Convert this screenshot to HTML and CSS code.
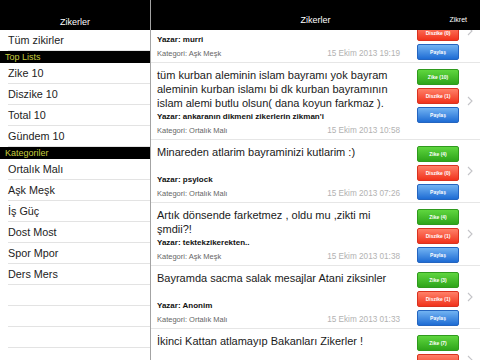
FILE: index.html
```html
<!DOCTYPE html>
<html lang="tr">

<head>
  <meta charset="UTF-8">
  <meta name="viewport" content="width=device-width, initial-scale=1.0">
  <title>Zikerler</title>
  <link rel="stylesheet" href="styles.css">
</head>

<body>
  <div class="app">

    <!-- Left menu -->
    <aside class="sidebar">
      <div class="navbar">
        <span class="nav-title">Zikerler</span>
      </div>
      <ul class="menu">
        <li class="menu-item">Tüm zikirler</li>
        <li class="menu-section">Top Lists</li>
        <li class="menu-item">Zike 10</li>
        <li class="menu-item">Diszike 10</li>
        <li class="menu-item">Total 10</li>
        <li class="menu-item">Gündem 10</li>
        <li class="menu-section">Kategoriler</li>
        <li class="menu-item">Ortalık Malı</li>
        <li class="menu-item">Aşk Meşk</li>
        <li class="menu-item">İş Güç</li>
        <li class="menu-item">Dost Most</li>
        <li class="menu-item">Spor Mpor</li>
        <li class="menu-item">Ders Mers</li>
        <li class="menu-item"></li>
        <li class="menu-item"></li>
        <li class="menu-item"></li>
      </ul>
    </aside>

    <!-- Feed -->
    <main class="main">
      <div class="navbar navbar-main">
        <span></span>
        <span class="nav-title">Zikerler</span>
        <a class="nav-action">Zikret</a>
      </div>

      <div class="feed">
        <div class="feed-list">

          <!-- scrolled half under the nav bar -->
          <div class="zik">
            <div class="zik-body">
              <p class="zik-text"></p>
              <p class="zik-author">Yazar: murri</p>
              <div class="zik-meta"><span>Kategori: Aşk Meşk</span><span class="zik-date">15 Ekim 2013 19:19</span></div>
            </div>
            <div class="zik-actions">
              <button class="btn btn-zike"></button>
              <button class="btn btn-diszike">Diszike (0)</button>
              <button class="btn btn-share">Paylaş</button>
            </div>
            <div class="zik-chevron"><svg width="6" height="10" viewBox="0 0 6 10"><polyline points="1,1 5,5 1,9" /></svg></div>
          </div>

          <div class="zik">
            <div class="zik-body">
              <p class="zik-text">tüm kurban aleminin islam bayramı yok bayram aleminin kurban islamı bi dk kurban bayramının islam alemi butlu olsun( dana koyun farkmaz ).</p>
              <p class="zik-author">Yazar: ankaranın dikmeni zikerlerin zikman'i</p>
              <div class="zik-meta"><span>Kategori: Ortalık Malı</span><span class="zik-date">15 Ekim 2013 10:58</span></div>
            </div>
            <div class="zik-actions">
              <button class="btn btn-zike">Zike (10)</button>
              <button class="btn btn-diszike">Diszike (1)</button>
              <button class="btn btn-share">Paylaş</button>
            </div>
            <div class="zik-chevron"><svg width="6" height="10" viewBox="0 0 6 10"><polyline points="1,1 5,5 1,9" /></svg></div>
          </div>

          <div class="zik">
            <div class="zik-body">
              <p class="zik-text">Minareden atlarim bayraminizi kutlarim :)</p>
              <p class="zik-author">Yazar: psylock</p>
              <div class="zik-meta"><span>Kategori: Ortalık Malı</span><span class="zik-date">15 Ekim 2013 07:26</span></div>
            </div>
            <div class="zik-actions">
              <button class="btn btn-zike">Zike (4)</button>
              <button class="btn btn-diszike">Diszike (0)</button>
              <button class="btn btn-share">Paylaş</button>
            </div>
            <div class="zik-chevron"><svg width="6" height="10" viewBox="0 0 6 10"><polyline points="1,1 5,5 1,9" /></svg></div>
          </div>

          <div class="zik">
            <div class="zik-body">
              <p class="zik-text">Artık dönsende farketmez , oldu mu ,zikti mi şmdii?!</p>
              <p class="zik-author">Yazar: tektekzikerekten..</p>
              <div class="zik-meta"><span>Kategori: Aşk Meşk</span><span class="zik-date">15 Ekim 2013 01:38</span></div>
            </div>
            <div class="zik-actions">
              <button class="btn btn-zike">Zike (4)</button>
              <button class="btn btn-diszike">Diszike (1)</button>
              <button class="btn btn-share">Paylaş</button>
            </div>
            <div class="zik-chevron"><svg width="6" height="10" viewBox="0 0 6 10"><polyline points="1,1 5,5 1,9" /></svg></div>
          </div>

          <div class="zik">
            <div class="zik-body">
              <p class="zik-text">Bayramda sacma salak mesajlar Atani ziksinler</p>
              <p class="zik-author">Yazar: Anonim</p>
              <div class="zik-meta"><span>Kategori: Ortalık Malı</span><span class="zik-date">15 Ekim 2013 01:33</span></div>
            </div>
            <div class="zik-actions">
              <button class="btn btn-zike">Zike (3)</button>
              <button class="btn btn-diszike">Diszike (1)</button>
              <button class="btn btn-share">Paylaş</button>
            </div>
            <div class="zik-chevron"><svg width="6" height="10" viewBox="0 0 6 10"><polyline points="1,1 5,5 1,9" /></svg></div>
          </div>

          <div class="zik">
            <div class="zik-body">
              <p class="zik-text">İkinci Kattan atlamayıp Bakanları Zikerler !</p>
              <p class="zik-author"></p>
              <div class="zik-meta"></div>
            </div>
            <div class="zik-actions">
              <button class="btn btn-zike">Zike (7)</button>
              <button class="btn btn-diszike"></button>
              <button class="btn btn-share"></button>
            </div>
            <div class="zik-chevron"><svg width="6" height="10" viewBox="0 0 6 10"><polyline points="1,1 5,5 1,9" /></svg></div>
          </div>

        </div>
      </div>
    </main>
  </div>
</body>

</html>
```

FILE: styles.css
```css
body {
  margin: 0;
  font-family: "Liberation Sans", Arial, sans-serif;
  background-color: #fff;
  color: #1a1a1a;
  overflow: hidden;
}

.app {
  display: flex;
  width: 480px;
  height: 360px;
  overflow: hidden;
}

/* Nav bars */
.navbar {
  height: 20px;
  padding-top: 10px;
  background-color: #000;
  color: #fff;
  text-align: center;
  line-height: 20px;
}

.nav-title {
  font-size: 9px;
}

.navbar-main {
  display: grid;
  grid-template-columns: 1fr auto 1fr;
}

.nav-action {
  justify-self: end;
  padding-right: 13px;
  font-size: 7px;
}

/* Sidebar */
.sidebar {
  width: 150px;
  flex-shrink: 0;
  border-right: 1px solid #a3a3a3;
}

.menu {
  list-style: none;
  margin: 0;
  padding: 0;
}

.menu-item {
  height: 20px;
  margin-left: 8px;
  border-bottom: 1px solid #e3e3e3;
  font-size: 10.8px;
  line-height: 21px;
  color: #222;
}

.menu-section {
  height: 12px;
  padding-left: 5px;
  background-color: #000;
  color: #c9cd3e;
  font-size: 9px;
  line-height: 13px;
}

/* Feed */
.main {
  flex: 1;
  min-width: 0;
}

.feed {
  height: 330px;
  overflow: hidden;
}

.feed-list {
  margin-top: -30px;
}

.zik {
  display: flex;
  align-items: center;
  padding-left: 6px;
  border-bottom: 1px solid #e6e6e6;
}

.zik-body {
  flex: 1;
  min-width: 0;
  padding: 5px 0 1px;
  align-self: flex-start;
}

.zik-body p {
  margin: 0;
}

.zik-text {
  min-height: 28px;
  font-size: 11px;
  line-height: 14px;
  color: #1a1a1a;
}

.zik-author {
  min-height: 14px;
  font-size: 8px;
  font-weight: bold;
  line-height: 14px;
  color: #111;
}

.zik-meta {
  display: flex;
  justify-content: space-between;
  align-items: baseline;
  min-height: 14px;
  padding-right: 2px;
  font-size: 7.5px;
  line-height: 14px;
  color: #666;
}

.zik-date {
  font-size: 8.2px;
  color: #b2b2b2;
}

.zik-actions {
  align-self: flex-start;
  display: flex;
  flex-direction: column;
  gap: 3px;
  width: 42px;
  margin-left: 15px;
  padding-top: 6px;
}

.btn {
  height: 16px;
  padding: 0;
  border-radius: 2px;
  font-family: "Liberation Sans", Arial, sans-serif;
  font-size: 5px;
  font-weight: bold;
  color: #fff;
  cursor: pointer;
}

.btn-zike {
  background: linear-gradient(#5fd63f, #2ea51a);
  border: 1px solid #2f9a1d;
}

.btn-diszike {
  background: linear-gradient(#ff8068, #f1331c);
  border: 1px solid #d9321f;
}

.btn-share {
  background: linear-gradient(#72b3f2, #1e6cd4);
  border: 1px solid #2465c0;
}

.zik-chevron {
  width: 21px;
  display: flex;
  justify-content: center;
}

.zik-chevron polyline {
  fill: none;
  stroke: #c4c4c8;
  stroke-width: 1.1;
}
```
